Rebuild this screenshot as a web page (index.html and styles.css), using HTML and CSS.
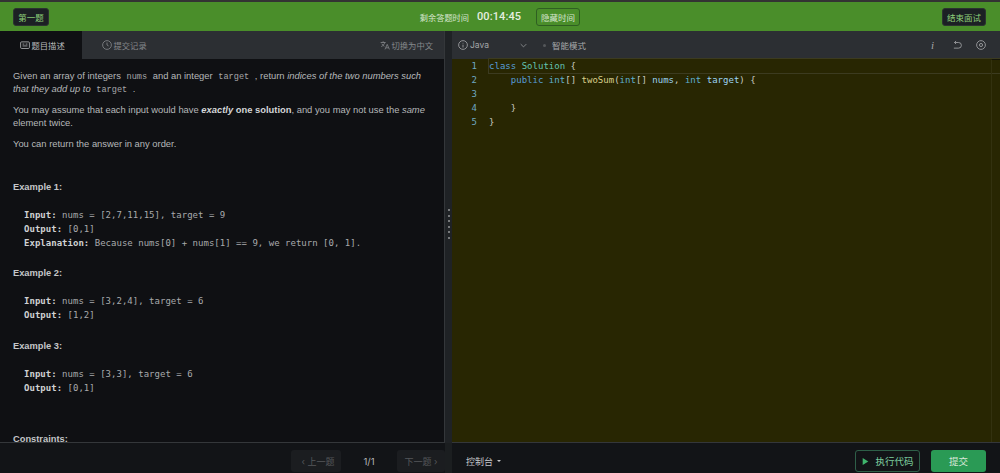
FILE: index.html
```html
<!DOCTYPE html>
<html lang="en">
<head>
  <meta charset="UTF-8" />
  <meta name="viewport" content="width=device-width, initial-scale=1.0"/>
  <title>第一题</title>
  <link rel="stylesheet" href="styles.css">
</head>
<body>
  <header class="topbar">
    <button class="btn-dark">第一题</button>
    <div class="timer">
      <span class="timer-label">剩余答题时间</span>
      <span class="timer-value">00:14:45</span>
      <button class="btn-hide">隐藏时间</button>
    </div>
    <button class="btn-dark btn-end">结束面试</button>
  </header>

  <main class="workspace">
    <!-- Left: problem -->
    <section class="left-pane">
      <div class="tabs">
        <div class="tab active">
          <svg class="icon" viewBox="0 0 16 16"><rect x="1" y="3" width="14" height="10.5" rx="1.5"/><path d="M4 6.5h3M4 9.5h8M9 6.5h3"/></svg>
          题目描述
        </div>
        <div class="tab">
          <svg class="icon" viewBox="0 0 16 16"><circle cx="8" cy="8" r="7"/><path d="M8 4V8l2.5 1.5"/></svg>
          提交记录
        </div>
        <div class="tab tab-switch">
          <svg class="icon" viewBox="0 0 16 16"><path d="M1 4h8M5 2V4M7.5 4c-.5 3-2.5 5-5.5 6.5M3 6c.8 2 2.2 3.2 4 4M8 15l3.5-8 3.5 8M9.5 12.5h4"/></svg>
          切换为中文
        </div>
      </div>
      <div class="problem">
        <p>Given an array of integers <code>nums</code> and an integer <code>target</code> , return <em>indices of the two numbers such that they add up to</em> <code>target</code> .</p>
        <p>You may assume that each input would have <strong><em>exactly</em> one solution</strong>, and you may not use the <em>same</em> element twice.</p>
        <p>You can return the answer in any order.</p>
        <h4 class="first-example">Example 1:</h4>
        <pre><b>Input:</b> nums = [2,7,11,15], target = 9
<b>Output:</b> [0,1]
<b>Explanation:</b> Because nums[0] + nums[1] == 9, we return [0, 1].</pre>
        <h4>Example 2:</h4>
        <pre><b>Input:</b> nums = [3,2,4], target = 6
<b>Output:</b> [1,2]</pre>
        <h4 class="third-example">Example 3:</h4>
        <pre><b>Input:</b> nums = [3,3], target = 6
<b>Output:</b> [0,1]</pre>
        <h4 class="constraints">Constraints:</h4>
      </div>
    </section>

    <div class="gutter">
      <div class="grip"><i></i><i></i><i></i><i></i><i></i><i></i></div>
    </div>

    <!-- Right: editor -->
    <section class="right-pane">
      <div class="editor-bar">
        <div class="lang">
          <svg class="icon" viewBox="0 0 16 16"><circle cx="8" cy="8" r="7"/><path d="M8 7.5V12M8 4.5v1.2"/></svg>
          <span>Java</span>
          <svg class="chevron" viewBox="0 0 10 6"><path d="M1 1l4 4 4-4"/></svg>
        </div>
        <div class="mode"><i class="dot"></i>智能模式</div>
        <div class="tools">
          <span class="tool-i">i</span>
          <svg class="icon" viewBox="0 0 16 16"><path d="M4 4h6.5a4.5 4.5 0 0 1 0 9H3M4 4l2.5-2.5M4 4l2.5 2.5"/></svg>
          <svg class="icon" viewBox="0 0 16 16"><circle cx="8" cy="8" r="7"/><circle cx="8" cy="8" r="2.5"/></svg>
        </div>
      </div>
      <div class="editor">
        <div class="line"><span class="ln">1</span><span class="code current"><span class="kw">class</span> <span class="ty">Solution</span> {</span></div>
        <div class="line"><span class="ln">2</span><span class="code">    <span class="kw">public</span> <span class="ty2">int</span>[] <span class="fn">twoSum</span>(<span class="ty2">int</span>[] <span class="var">nums</span>, <span class="ty2">int</span> <span class="var">target</span>) {</span></div>
        <div class="line"><span class="ln">3</span><span class="code"></span></div>
        <div class="line"><span class="ln">4</span><span class="code">    }</span></div>
        <div class="line"><span class="ln">5</span><span class="code">}</span></div>
        <div class="ruler"></div>
      </div>
    </section>
  </main>

  <footer class="bottombar">
    <div class="pager">
      <button class="page-btn prev">‹ 上一题</button>
      <span class="page-num">1/1</span>
      <button class="page-btn next">下一题 ›</button>
    </div>
    <div class="actions">
      <span class="console">控制台 <i class="caret"></i></span>
      <button class="btn-run"><svg viewBox="0 0 10 12"><path d="M1 1l8 5-8 5z"/></svg>执行代码</button>
      <button class="btn-submit">提交</button>
    </div>
  </footer>
</body>
</html>
```

FILE: styles.css
```css
* { box-sizing: border-box; }
html, body { height: 100%; }
body {
  margin: 0;
  display: flex;
  flex-direction: column;
  height: 473px;
  overflow: hidden;
  background: #121417;
  font-family: Inter, "Noto Sans CJK SC", sans-serif;
  font-size: 11px;
  color: #c4c6c8;
}
button {
  font-family: inherit;
  cursor: pointer;
}
.topbar {
  flex: 0 0 31px;
  display: flex;
  align-items: center;
  justify-content: space-between;
  padding: 0 14px 0 13px;
  background: #4a8e2a;
  border-top: 2px solid #333;
}
.btn-dark {
  height: 18px;
  width: 36px;
  padding: 0;
  border: 1px solid #2c3330;
  border-radius: 3px;
  background: #1c2024;
  color: #8fd07a;
  font-size: 8.5px;
}
.btn-end {
  width: 44px;
}
.timer {
  display: flex;
  align-items: center;
  margin-left: 9px;
}
.timer-label {
  font-size: 8.2px;
  color: #d8e6d0;
}
.timer-value {
  margin: 0 15px 0 8px;
  font-family: Roboto, sans-serif;
  font-size: 11px;
  font-weight: 500;
  letter-spacing: 0.1px;
  color: #e6efe0;
}
.btn-hide {
  width: 44px;
  height: 18px;
  padding: 0;
  background: transparent;
  border: 1px solid #2f5f22;
  border-radius: 3px;
  color: #d8e6d0;
  font-size: 8.5px;
}
.workspace {
  flex: 1;
  display: flex;
  min-height: 0;
}
.left-pane {
  width: 445px;
  display: flex;
  flex-direction: column;
  background: #0f1013;
  border-right: 1px solid #34373a;
  border-bottom: 1px solid #34373a;
}
.tabs {
  flex: 0 0 28px;
  display: flex;
  align-items: center;
  background: #2c2f33;
}
.tab {
  height: 100%;
  display: flex;
  align-items: center;
  gap: 1.5px;
  padding: 0 0 0 20px;
  width: 82px;
  color: #85888b;
  font-size: 8.3px;
}
.tab.active {
  background: #0f1013;
  color: #b8babc;
}
.tab-switch {
  margin-left: auto;
  width: auto;
  padding-right: 11px;
}
.icon {
  width: 10px;
  height: 10px;
  fill: none;
  stroke: currentColor;
  stroke-width: 1.3;
  flex: none;
}
.problem {
  flex: 1;
  overflow: hidden;
  padding: 10px 13px 0;
  font-family: "Liberation Sans", sans-serif;
  font-size: 9.4px;
  line-height: 13px;
  color: #b6b8ba;
}
.problem p { margin: 0 0 8px; }
.problem code {
  font-family: "Liberation Mono", monospace;
  font-size: 8.6px;
  line-height: 1;
  margin: 0 3px;
  color: #a4a6a8;
}
.problem strong { color: #d4d6d8; }
.problem h4 {
  margin: 16px 0 0;
  font-size: 9.3px;
  line-height: 14px;
  font-weight: 700;
  color: #c4c6c8;
}
.problem h4.first-example { margin-top: 30px; }
.problem h4.third-example { margin-top: 17px; }
.problem h4.constraints { margin-top: 37px; }
.problem pre {
  margin: 14px 0 0;
  padding-left: 11px;
  font-family: "DejaVu Sans Mono", monospace;
  font-size: 9px;
  letter-spacing: 0.02px;
  line-height: 14px;
  color: #a8aaac;
}
.problem pre b {
  color: #d0d2d4;
}
.gutter {
  flex: 0 0 7px;
  display: flex;
  align-items: center;
  justify-content: center;
  background: #1f2225;
}
.grip {
  display: flex;
  flex-direction: column;
  gap: 3.5px;
  margin-top: -26px;
}
.grip i {
  width: 2px;
  height: 2px;
  background: #77797b;
}
.right-pane {
  flex: 1;
  display: flex;
  flex-direction: column;
  min-width: 0;
}
.editor-bar {
  flex: 0 0 28px;
  display: flex;
  align-items: center;
  padding: 0 14px 0 6px;
  background: #2c2f33;
  color: #a6a8aa;
  font-size: 8.5px;
}
.lang {
  display: flex;
  align-items: center;
  gap: 2px;
  width: 84px;
}
.lang .chevron {
  width: 7px;
  height: 5px;
  margin-left: 29px;
  fill: none;
  stroke: #a6a8aa;
}
.mode {
  display: flex;
  align-items: center;
  gap: 6px;
  margin-left: 1px;
}
.dot {
  width: 3px;
  height: 3px;
  border-radius: 50%;
  background: #54575a;
}
.tools {
  margin-left: auto;
  display: flex;
  align-items: center;
  gap: 14px;
}
.tool-i {
  margin-right: 4px;
  font-style: italic;
  font-family: "Liberation Serif", serif;
  font-size: 11px;
}
.editor {
  flex: 1;
  position: relative;
  background: #282602;
  border-bottom: 1px solid #34373a;
  font-family: "DejaVu Sans Mono", monospace;
  font-size: 9px;
  letter-spacing: 0.02px;
  line-height: 14px;
  color: #c9cbc0;
}
.ruler {
  position: absolute;
  top: 0;
  right: 0;
  bottom: 0;
  width: 9px;
  border-top: 1px solid #15150a;
  border-left: 1px solid #33310f;
}
.line {
  display: flex;
  height: 14px;
  white-space: pre;
}
.ln {
  width: 25px;
  text-align: right;
  color: #6fa8c4;
  flex: none;
}
.code {
  flex: 1;
  margin-left: 12px;
}
.code.current {
  outline: 1px solid #3c3b20;
}
.kw { color: #569cd6; }
.ty { color: #62c3b4; }
.ty2 { color: #5fb0d0; }
.fn { color: #d8d08c; }
.var { color: #9cd4f4; }
.bottombar {
  flex: 0 0 30px;
  display: flex;
  background: #121417;
}
.pager {
  flex: 0 0 452px;
  display: flex;
  align-items: center;
  justify-content: flex-end;
  padding-top: 6px;
  border-right: 7px solid #1b1e20;
}
.page-btn {
  width: 50px;
  height: 22px;
  padding: 0;
  border: 0;
  border-radius: 3px;
  background: #1b1d20;
  color: #55575a;
  font-size: 9px;
}
.page-btn.prev { padding-left: 4px; }
.page-btn.next { width: 48px; }
.page-num {
  width: 56px;
  text-align: center;
  font-size: 9.5px;
  color: #b6b8ba;
}
.actions {
  flex: 1;
  display: flex;
  align-items: center;
  padding: 6px 14px 0;
}
.console {
  margin-right: auto;
  font-size: 9px;
  color: #c4c6c8;
}
.caret {
  display: inline-block;
  width: 0;
  height: 0;
  margin: 0 0 2px 1px;
  border: 2px solid transparent;
  border-top-color: #c4c6c8;
  border-bottom: 0;
  vertical-align: middle;
}
.btn-run {
  display: flex;
  align-items: center;
  justify-content: center;
  gap: 6px;
  width: 65px;
  height: 22px;
  padding: 0 0 0 1px;
  background: transparent;
  border: 1px solid #2e5f48;
  border-radius: 3px;
  color: #7fd0a0;
  font-size: 9.5px;
}
.btn-run svg {
  width: 7px;
  height: 9px;
  fill: #3fb46c;
}
.btn-submit {
  width: 55px;
  height: 22px;
  margin-left: 11px;
  padding: 0;
  border: 0;
  border-radius: 3px;
  background: #2a9a55;
  color: #d8e8d8;
  font-size: 9.5px;
}
```
